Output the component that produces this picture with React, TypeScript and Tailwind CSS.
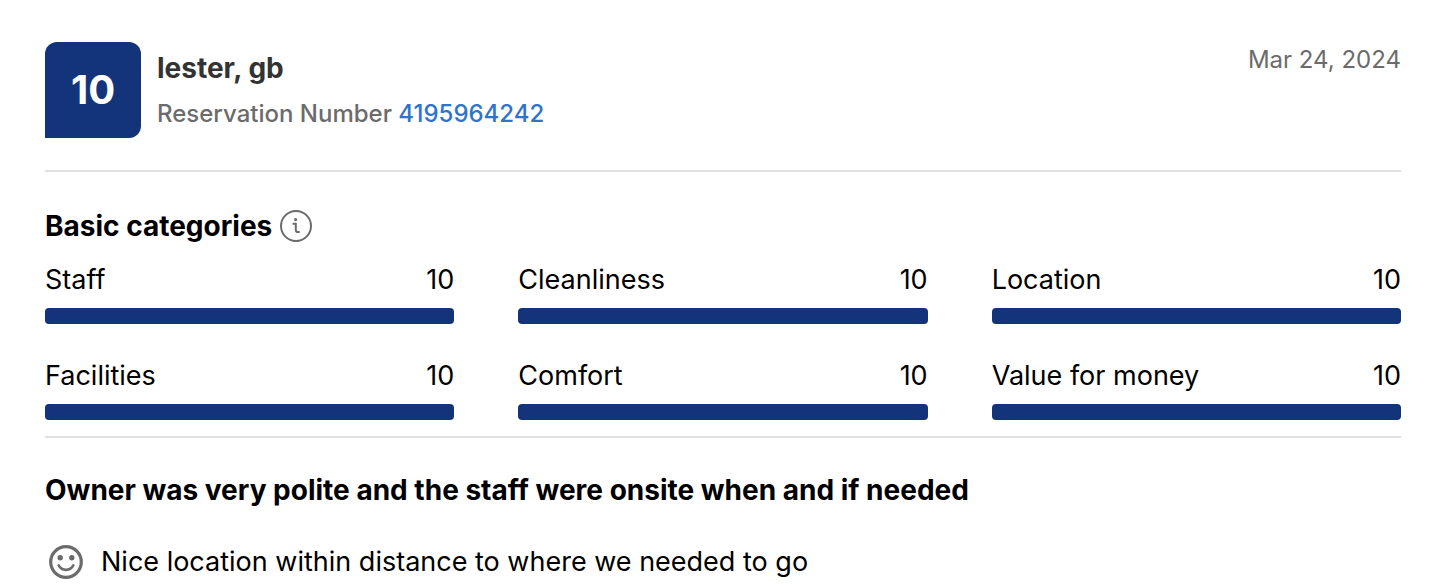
interface Category {
  id: string;
  name: string;
  score: number;
}

const MAX_SCORE = 10;

const categories: Category[] = [
  { id: 'staff', name: 'Staff', score: 10 },
  { id: 'cleanliness', name: 'Cleanliness', score: 10 },
  { id: 'location', name: 'Location', score: 10 },
  { id: 'facilities', name: 'Facilities', score: 10 },
  { id: 'comfort', name: 'Comfort', score: 10 },
  { id: 'value', name: 'Value for money', score: 10 },
];

function InfoIcon() {
  return (
    <svg viewBox="0 0 32 32" className="size-8" fill="none" stroke="currentColor" aria-hidden="true">
      <circle cx="16" cy="16" r="15" strokeWidth="2" />
      <path d="M12.6 13.8h3.2v6.2c0 1.4.6 2.1 1.9 2.1h2" strokeWidth="2" />
      <circle cx="15.6" cy="9.6" r="1.6" fill="currentColor" stroke="none" />
    </svg>
  );
}

function SmileIcon() {
  return (
    <svg viewBox="0 0 34 34" className="size-[34px]" fill="none" stroke="currentColor" aria-hidden="true">
      <circle cx="17" cy="17" r="15.3" strokeWidth="3.2" />
      <path d="M9.7 20.4c1.6 3 4.2 4.5 7.3 4.5s5.7-1.5 7.3-4.5" strokeWidth="2.6" strokeLinecap="round" />
      <circle cx="11.2" cy="12.8" r="2.7" fill="currentColor" stroke="none" />
      <circle cx="22.8" cy="12.8" r="2.7" fill="currentColor" stroke="none" />
    </svg>
  );
}

function CategoryScore({ category }: { category: Category }) {
  return (
    <div>
      <div className="flex h-14 items-center justify-between">
        <span id={category.id}>{category.name}</span>
        <span>{category.score}</span>
      </div>
      <div
        role="meter"
        aria-labelledby={category.id}
        aria-valuemin={0}
        aria-valuemax={MAX_SCORE}
        aria-valuenow={category.score}
        className="h-4 overflow-hidden rounded bg-gray-200"
      >
        <div className="h-full bg-[#13347a]" style={{ width: `${(category.score / MAX_SCORE) * 100}%` }} />
      </div>
    </div>
  );
}

export default function App() {
  return (
    <main className="bg-white pt-[42px] pr-[39px] pl-[45px] font-['Inter','Liberation_Sans',sans-serif] text-[27px] leading-9 text-black">
      <header className="flex items-start justify-between border-b-2 border-[#e0e0e0] pb-8">
        <div className="flex gap-4">
          <div className="flex size-24 items-center justify-center rounded-xl rounded-bl-none bg-[#13347a] text-[40px] font-bold text-white">
            10
          </div>
          <div className="pt-2">
            <h1 className="text-[28px] font-bold text-[#333333]">lester, gb</h1>
            <p className="pt-[10px] text-[24px] font-medium text-[#6b6b6b]">
              Reservation Number{' '}
              <a href="#reservation" className="text-[#2f74cb]">
                4195964242
              </a>
            </p>
          </div>
        </div>
        <time dateTime="2024-03-24" className="text-[24px] text-[#6b6b6b]">
          Mar 24, 2024
        </time>
      </header>

      <section className="border-b-2 border-[#e0e0e0] pt-9 pb-4">
        <div className="flex items-center gap-2 pb-2">
          <h2 className="text-[28px] font-bold">Basic categories</h2>
          <button type="button" aria-label="About basic categories" className="text-[#6b6b6b]">
            <InfoIcon />
          </button>
        </div>
        <div className="grid grid-cols-3 gap-x-16 gap-y-6">
          {categories.map((category) => (
            <CategoryScore key={category.id} category={category} />
          ))}
        </div>
      </section>

      <section className="pt-[34px]">
        <h2 className="text-[28px] font-bold">Owner was very polite and the staff were onsite when and if needed</h2>
        <div className="flex items-center gap-[18px] pt-9 pl-1">
          <span className="text-[#6b6b6b]">
            <SmileIcon />
          </span>
          <p>Nice location within distance to where we needed to go</p>
        </div>
      </section>
    </main>
  );
}
